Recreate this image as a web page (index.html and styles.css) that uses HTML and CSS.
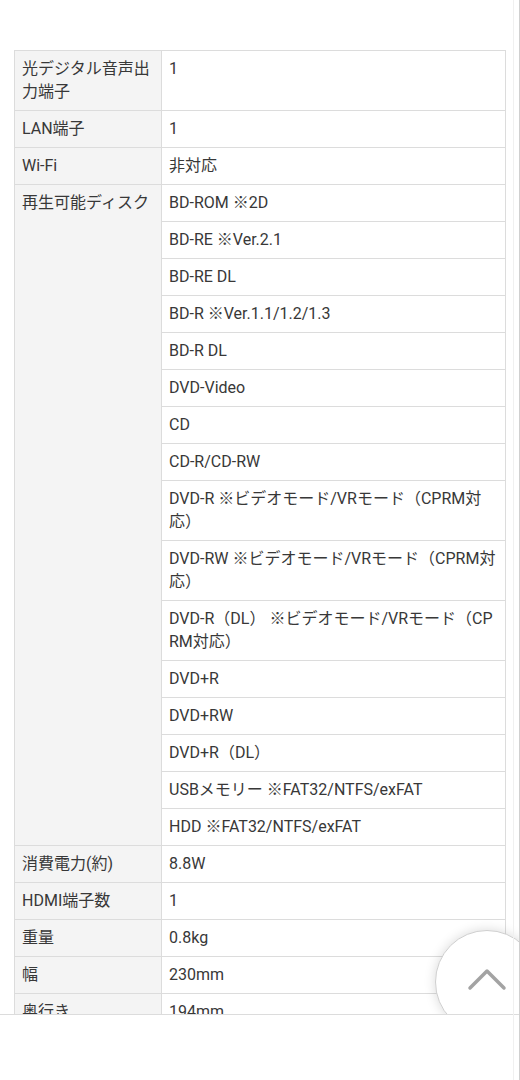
FILE: index.html
```html
<!DOCTYPE html>
<html lang="ja">
<head>
<meta charset="utf-8">
<link rel="stylesheet" href="styles.css">
</head>
<body>
<div class="page">
  <table class="spec">
    <tr><th>光デジタル音声出力端子</th><td>1</td></tr>
    <tr><th>LAN端子</th><td>1</td></tr>
    <tr><th>Wi-Fi</th><td>非対応</td></tr>
    <tr><th rowspan="16">再生可能ディスク</th><td>BD-ROM ※2D</td></tr>
    <tr><td>BD-RE ※Ver.2.1</td></tr>
    <tr><td>BD-RE DL</td></tr>
    <tr><td>BD-R ※Ver.1.1/1.2/1.3</td></tr>
    <tr><td>BD-R DL</td></tr>
    <tr><td>DVD-Video</td></tr>
    <tr><td>CD</td></tr>
    <tr><td>CD-R/CD-RW</td></tr>
    <tr><td>DVD-R ※ビデオモード/VRモード（CPRM対応）</td></tr>
    <tr><td>DVD-RW ※ビデオモード/VRモード（CPRM対応）</td></tr>
    <tr><td>DVD-R（DL） ※ビデオモード/VRモード（CPRM対応）</td></tr>
    <tr><td>DVD+R</td></tr>
    <tr><td>DVD+RW</td></tr>
    <tr><td>DVD+R（DL）</td></tr>
    <tr><td>USBメモリー ※FAT32/NTFS/exFAT</td></tr>
    <tr><td>HDD ※FAT32/NTFS/exFAT</td></tr>
    <tr><th>消費電力(約)</th><td>8.8W</td></tr>
    <tr><th>HDMI端子数</th><td>1</td></tr>
    <tr><th>重量</th><td>0.8kg</td></tr>
    <tr><th>幅</th><td>230mm</td></tr>
    <tr><th>奥行き</th><td>194mm</td></tr>
    <tr><th>高さ</th><td>39mm</td></tr>
  </table>
</div>
<button class="to-top" aria-label="ページトップへ">
  <svg width="40" height="24" viewBox="0 0 40 24"><path d="M3 20 L20 3 L37 20" fill="none" stroke="#a3a3a3" stroke-width="3.5" stroke-linecap="round" stroke-linejoin="round"/></svg>
</button>
<div class="bottom-bar"></div>
<div class="edge-line"></div>
</body>
</html>
```
FILE: styles.css
```css
html, body {
  margin: 0;
  padding: 0;
  background: #fff;
}
body {
  font-family: Roboto, "Noto Sans CJK JP", sans-serif;
  font-size: 16px;
  color: #383838;
  overflow: hidden;
  height: 1080px;
}
.page {
  padding: 50px 14px 0 14px;
}
.spec {
  width: 492px;
  border-collapse: collapse;
  table-layout: fixed;
  border-top: 1px solid #e8e8e8;
}
.spec th,
.spec td {
  border: 1px solid #dcdcdc;
  padding: 6px 7px 7px 7px;
  line-height: 23px;
  text-align: left;
  vertical-align: top;
  font-weight: normal;
  word-break: break-all;
}
.spec th {
  width: 132px;
  background: #f4f4f4;
}
.spec td {
  background: #fff;
}
.to-top {
  position: fixed;
  left: 435px;
  top: 930px;
  width: 104px;
  height: 104px;
  border-radius: 50%;
  background: #fff;
  border: 1px solid #cfcfcf;
  box-shadow: 0 0 12px rgba(0, 0, 0, 0.15);
  padding: 0;
  display: flex;
  align-items: flex-start;
  justify-content: flex-start;
}
.to-top svg {
  margin: 37px 0 0 31px;
}
.bottom-bar {
  position: fixed;
  left: 0;
  right: 0;
  top: 1014px;
  bottom: 0;
  background: #fff;
  border-top: 1px solid #dcdcdc;
}
.edge-line {
  position: fixed;
  top: 0;
  bottom: 0;
  right: 0;
  width: 1px;
  background: #d0d0d0;
  box-shadow: -6px 0 0 #f0f0f0;
}
```
